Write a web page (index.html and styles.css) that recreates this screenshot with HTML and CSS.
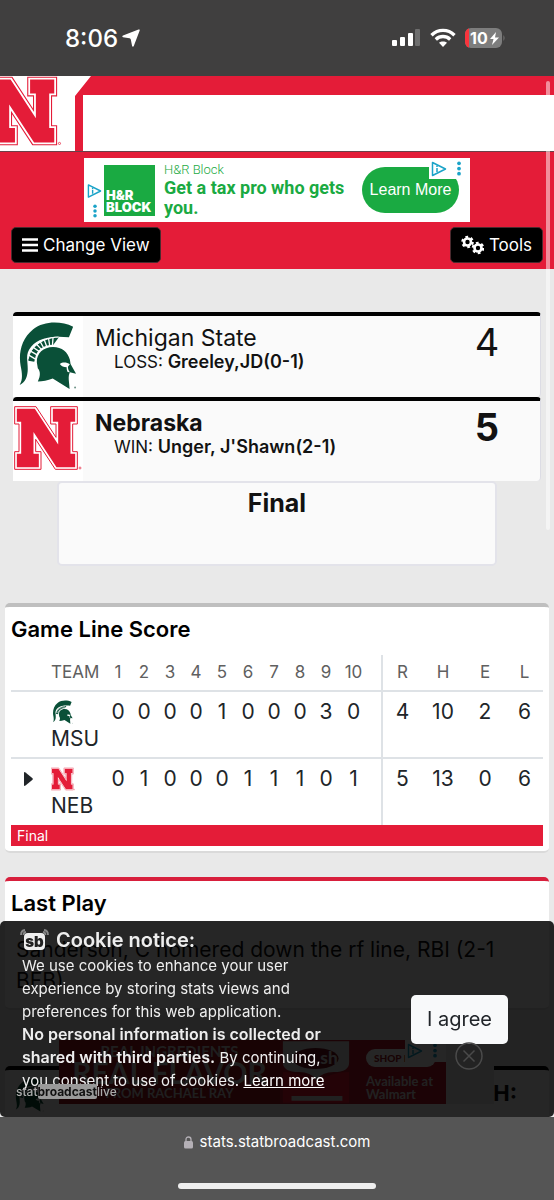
FILE: index.html
```html
<!DOCTYPE html>
<html lang="en">
<head>
	<meta charset="utf-8">
	<meta name="viewport" content="width=device-width, initial-scale=1">
	<title>Michigan State vs Nebraska</title>
	<link rel="stylesheet" href="styles.css">
</head>
<body>
<!-- team logos and ad marks, shared -->
<svg class="defs" width="0" height="0" aria-hidden="true">
	<symbol id="logo-n" viewBox="-2 -2 204 192">
		<path d="M0 0H64L124 92V52H108V0H188V52H174V135H188V188H122L63 98V135H79V188H0V135H13V52H0Z" fill="#e41c38" stroke="#fff" stroke-width="13"/>
		<path d="M0 0H64L124 92V52H108V0H188V52H174V135H188V188H122L63 98V135H79V188H0V135H13V52H0Z" fill="none" stroke="#e41c38" stroke-width="3"/>
		<circle cx="196" cy="184" r="3" fill="none" stroke="#e41c38" stroke-width="2"/>
	</symbol>
	<symbol id="logo-msu" viewBox="0 0 182 212">
		<path d="M167 17C130 0 78 -2 43 26C8 54 -2 98 5 138C10 162 12 180 2 197C21 189 27 168 27 148C27 120 18 101 38 78C62 50 105 45 154 50Z" fill="#0a5038"/>
		<path d="M29 122C30 86 70 50 123 50L106 73C82 73 53 85 49 118L47 125Z" fill="#0a5038"/>
		<path d="M29 104L52 118M33 91L57 105M41 79L63 94M52 69L69 87M64 61L76 82M77 55L86 80M91 52L95 78M105 50L103 77" stroke="#fff" stroke-width="4" fill="none"/>
		<path d="M29 116C33 80 73 51 122 49" stroke="#fff" stroke-width="3" fill="none"/>
		<path d="M55 127C54 100 75 80 105 80C133 80 150 96 157 119L159 132L176 162L157 158C150 172 155 187 156 209L104 177C89 183 72 186 58 186C66 170 67 155 58 145Z" fill="#0a5038"/>
		<path d="M126 132C135 125 148 127 157 133L151 141C151 148 153 153 157 158L150 157C147 150 147 145 147 142C138 142 131 140 126 132Z" fill="#fff"/>
		<circle cx="173" cy="205" r="3" fill="#6c9186"/>
	</symbol>
	<symbol id="adchoice" viewBox="0 0 16 16">
		<path d="M1.500 1.500L14.500 8L1.500 14.500Z" fill="none" stroke="#1aa3c8" stroke-width="1.500" stroke-linejoin="round"/>
		<path d="M6 7V11M6 4.500V6" stroke="#1aa3c8" stroke-width="1.500"/>
	</symbol>
	<symbol id="dots" viewBox="0 0 4 16">
		<circle cx="2" cy="2.500" r="2" fill="#1aa3c8"/><circle cx="2" cy="8" r="2" fill="#1aa3c8"/><circle cx="2" cy="13.500" r="2" fill="#1aa3c8"/>
	</symbol>
</svg>

<div class="statusbar">
	<div class="clock">8:06
		<svg width="18" height="18" viewBox="0 0 18 18"><path d="M16.500 .5C17.500 .2 18 .7 17.600 1.700L11.800 17C11.400 18 10.400 18 10.100 17L8.800 10.500Q8.600 9.500 7.600 9.300L1 8.200C0 8 0 7 1 6.600Z" fill="#fff"/></svg>
	</div>
	<div class="signals">
		<svg width="30" height="20" viewBox="0 0 30 20"><g fill="#fff"><rect x="1" y="12" width="5" height="6" rx="1"/><rect x="9" y="9" width="5" height="9" rx="1"/><rect x="17" y="5" width="5" height="13" rx="1"/></g><rect x="24" y="1" width="5" height="17" rx="1" fill="#6e6e6e"/></svg>
		<svg width="26" height="20" viewBox="0 0 26 20"><g fill="none" stroke="#fff" stroke-width="3.400"><path d="M1.500 7.200C8 .8 18 .8 24.500 7.200"/><path d="M5.800 11.400C10 7.600 16 7.600 20.200 11.400"/></g><path d="M13 19L9 14.800C11 12.900 15 12.900 17 14.800Z" fill="#fff"/></svg>
		<svg width="41" height="20" viewBox="0 0 41 20"><defs><clipPath id="cell"><rect x="0" y="0" width="37" height="20" rx="6"/></clipPath></defs><g clip-path="url(#cell)"><rect width="37" height="20" fill="#7d7d7d"/><rect width="4" height="20" fill="#f8343c"/></g><path d="M38.500 7Q40.500 10 38.500 13Z" fill="#7d7d7d"/><text x="5" y="16" class="battery">10</text><path d="M31 4L25 11H28.500L27 17L34 9.500H30Z" fill="#fff"/></svg>
	</div>
</div>

<header class="masthead">
	<div class="brand"><svg class="brand-n" viewBox="31 -2 172 192" width="62" height="70"><use href="#logo-n" x="-2" y="-2" width="204" height="192"/></svg></div>
	<div class="masthead-panel"></div>
</header>

<div class="topbar">
	<div class="ad">
		<div class="ad-marks">
			<svg width="15" height="16"><use href="#adchoice"/></svg>
			<svg width="4" height="14"><use href="#dots"/></svg>
		</div>
		<div class="hrb">H&amp;R<br>BLOCK</div>
		<div class="ad-copy">
			<span class="ad-name">H&amp;R Block</span>
			<strong>Get a tax pro who gets you.</strong>
		</div>
		<a class="ad-cta" href="#">Learn More</a>
		<div class="ad-corner">
			<svg width="16" height="16"><use href="#adchoice"/></svg>
			<svg width="4" height="15"><use href="#dots"/></svg>
		</div>
	</div>
	<div class="toolbar">
		<button class="btn-dark" type="button">
			<svg width="16" height="14" viewBox="0 0 16 14"><path d="M0 1.500H16M0 7H16M0 12.500H16" stroke="#fff" stroke-width="2.400"/></svg>
			Change View
		</button>
		<button class="btn-dark" type="button">
			<svg width="23" height="20" viewBox="0 0 23 20"><g fill="none" stroke="#fff"><circle cx="6.500" cy="7" r="3.500" stroke-width="2.600"/><circle cx="6.500" cy="7" r="5" stroke-width="2.600" stroke-dasharray="2.618"/><circle cx="17" cy="13" r="3.500" stroke-width="2.600"/><circle cx="17" cy="13" r="5" stroke-width="2.600" stroke-dasharray="2.618"/></g></svg>
			Tools
		</button>
	</div>
</div>

<main>
	<section class="scores">
		<div class="team">
			<div class="team-logo"><svg width="59" height="69"><use href="#logo-msu"/></svg></div>
			<div class="team-info">
				<div class="team-name">Michigan State</div>
				<div class="pitcher">LOSS: <b>Greeley,JD(0-1)</b></div>
			</div>
			<div class="runs">4</div>
		</div>
		<div class="team winner">
			<div class="team-logo"><svg width="68" height="64"><use href="#logo-n"/></svg></div>
			<div class="team-info">
				<div class="team-name">Nebraska</div>
				<div class="pitcher">WIN: <b>Unger, J'Shawn(2-1)</b></div>
			</div>
			<div class="runs">5</div>
		</div>
		<div class="status">Final</div>
	</section>

	<section class="card">
		<h2>Game Line Score</h2>
		<table class="linescore">
			<colgroup><col class="c-arrow"><col class="c-team"><col span="9" class="c-inn"><col class="c-last"><col class="c-r"><col class="c-h"><col class="c-h"><col class="c-l"></colgroup>
			<thead>
				<tr><th></th><th class="tm">TEAM</th><th>1</th><th>2</th><th>3</th><th>4</th><th>5</th><th>6</th><th>7</th><th>8</th><th>9</th><th class="last">10</th><th>R</th><th>H</th><th>E</th><th>L</th></tr>
			</thead>
			<tbody>
				<tr><td></td><td class="tm"><svg width="24" height="24"><use href="#logo-msu"/></svg>MSU</td><td>0</td><td>0</td><td>0</td><td>0</td><td>1</td><td>0</td><td>0</td><td>0</td><td>3</td><td class="last">0</td><td>4</td><td>10</td><td>2</td><td>6</td></tr>
				<tr><td><svg class="arrow" width="9" height="14" viewBox="0 0 9 14"><path d="M0 1Q0-.5 1.500 .5L8.500 6.300Q9 7 8.500 7.700L1.500 13.500Q0 14.500 0 13Z" fill="#212529"/></svg></td><td class="tm"><svg width="24" height="24"><use href="#logo-n"/></svg>NEB</td><td>0</td><td>1</td><td>0</td><td>0</td><td>0</td><td>1</td><td>1</td><td>1</td><td>0</td><td class="last">1</td><td>5</td><td>13</td><td>0</td><td>6</td></tr>
			</tbody>
		</table>
		<div class="gamestate">Final</div>
	</section>

	<section class="card lastplay">
		<h2>Last Play</h2>
		<p>Sanderson, C homered down the rf line, RBI (2-1 BFB)</p>
	</section>

	<section class="card atbat">
		<svg width="30" height="34"><use href="#logo-msu"/></svg>
		<strong>H:</strong>
	</section>
</main>

<!-- sticky ad, sits under the cookie notice -->
<div class="sticky-ad">
	<div class="sticky-main">
		<span class="ri">REAL INGREDIENTS</span>
		<span class="rf">REAL FLAVOR</span>
		<span class="rr">FROM RACHAEL RAY</span>
	</div>
	<svg class="sticky-logo" width="72" height="64" viewBox="0 0 75 64"><path d="M3 0H72V22Q72 32 56 32Q44 32 38 40Q32 32 20 32Q3 32 3 22Z" fill="#ddd"/><ellipse cx="37" cy="18" rx="24" ry="11" fill="#701020"/><text x="42" y="24" class="dish">sh</text><path d="M3 32Q20 32 38 42Q54 32 72 32V64H3Z" fill="#f01830"/><path d="M12 57H65V62H12Z" fill="#ddd"/></svg>
	<div class="sticky-shop">
		<span class="shop-btn">SHOP NOW</span>
		<b>Available at<br>Walmart</b>
		<div class="shop-marks">
			<svg width="16" height="16"><use href="#adchoice"/></svg>
			<svg width="4" height="15"><use href="#dots"/></svg>
		</div>
	</div>
</div>

<aside class="cookie">
	<div class="cookie-text">
		<h3>
			<svg width="29" height="22" viewBox="0 0 29 22"><rect x="4" y="4" width="21" height="17" rx="4" fill="#eee"/><path d="M1 6Q1 1.500 5 1M3.500 6Q3.500 3.500 6 3M28 6Q28 1.500 24 1M25.500 6Q25.500 3.500 23 3" fill="none" stroke="#888" stroke-width="1.800"/><text x="14.500" y="17.500" text-anchor="middle" class="sb">sb</text></svg>
			Cookie notice:
		</h3>
		<p>We use cookies to enhance your user<br>experience by storing stats views and<br>preferences for this web application.<br><b>No personal information is collected or<br>shared with third parties.</b> By continuing,<br>you consent to use of cookies. <a href="#">Learn more</a></p>
	</div>
	<button class="agree" type="button">I agree</button>
	<div class="sblive">stat<span>broadcast</span>live</div>
</aside>

<button class="sticky-close" type="button" aria-label="Close ad"><svg width="28" height="28" viewBox="0 0 28 28"><circle cx="14" cy="14" r="13" fill="none" stroke="#4a4a4a" stroke-width="1.500"/><path d="M8.500 8.500L19.500 19.500M19.500 8.500L8.500 19.500" stroke="#4a4a4a" stroke-width="1.500"/></svg></button>

<div class="scrollthumb"></div>

<footer class="urlbar">
	<div class="url">
		<svg width="9" height="13" viewBox="0 0 9 13"><rect y="5" width="9" height="7.500" rx="1.500" fill="#b4b0b6"/><path d="M2 6V3.500Q2 1 4.500 1T7 3.500V6" fill="none" stroke="#b4b0b6" stroke-width="1.300"/></svg>
		stats.statbroadcast.com
	</div>
	<div class="home"></div>
</footer>
</body>
</html>
```
FILE: styles.css
```css
*{
	box-sizing: border-box;
}
body{
	margin: 0;
	background: #e9e9e9;
	font-family: Inter, "Liberation Sans", sans-serif;
	color: #121212;
}
h2, h3, p{
	margin: 0;
}
svg{
	flex: none;
}
.defs{
	position: absolute;
}
/* phone status bar */
.statusbar{
	display: flex;
	justify-content: space-between;
	align-items: center;
	height: 76px;
	padding: 0 48px 0 65px;
	background: #403f3f;
	color: #fff;
}
.clock{
	display: flex;
	align-items: center;
	gap: 4px;
	font-size: 24px;
	font-weight: 500;
}
.signals{
	display: flex;
	align-items: center;
	gap: 9px;
}
.battery{
	font-size: 16px;
	font-weight: 700;
	fill: #fff;
}
/* team header */
.masthead{
	display: flex;
	align-items: flex-end;
	height: 76px;
	background: #e41c38;
	border-bottom: 1px solid #6b4048;
}
.brand{
	width: 91px;
	height: 75px;
	margin-right: -8px;
	background: #fff;
	clip-path: polygon(0 0, 100% 0, 75px 20px, 75px 100%, 0 100%);
}
.masthead-panel{
	flex: 1;
	height: 56px;
	background: #fff;
}
.topbar{
	background: #e41c38;
	padding: 6px 11px;
}
.ad{
	position: relative;
	display: flex;
	align-items: center;
	width: 386px;
	height: 64px;
	margin: 0 auto;
	padding: 0 11px 0 3px;
	background: #fff;
	color: #1aaa42;
	font-family: Roboto, sans-serif;
}
.ad-marks{
	display: flex;
	flex-direction: column;
	align-items: center;
	gap: 5px;
	padding-top: 20px;
	margin-right: 2px;
}
.hrb{
	display: flex;
	align-items: flex-end;
	width: 51px;
	height: 51px;
	padding: 0 0 3px 2px;
	background: #1aaa42;
	color: #fff;
	font: 900 13px/12px Inter, sans-serif;
}
.ad-copy{
	flex: 1;
	padding-left: 9px;
	font-size: 18px;
	line-height: 20px;
}
.ad-name{
	display: block;
	font-size: 13px;
	line-height: 16px;
	font-weight: 300;
}
.ad-cta{
	width: 97px;
	border-radius: 23px;
	background: #1aaa42;
	color: #fff;
	font: 16px/46px "Liberation Sans", sans-serif;
	text-align: center;
	text-decoration: none;
}
.ad-corner{
	position: absolute;
	top: 0;
	right: 0;
	display: flex;
	gap: 10px;
	padding: 3px 9px 2px 2px;
	background: #fff;
}
.toolbar{
	display: flex;
	justify-content: space-between;
	padding-top: 5px;
}
.btn-dark{
	display: flex;
	align-items: center;
	gap: 5px;
	height: 36px;
	padding: 0 10px;
	border: 1px solid #4a2a2e;
	border-radius: 5px;
	background: #000;
	color: #fff;
	font: 17px Inter, sans-serif;
}
/* scoreboard */
main{
	padding: 43px 5px 0;
}
.scores{
	padding: 0 8px;
}
.team{
	display: flex;
	height: 85px;
	border-top: 4px solid #000;
	border-right: 1px solid #dcdce4;
	border-radius: 4px;
	background: #fafafa;
}
.team-logo{
	display: flex;
	justify-content: center;
	width: 70px;
	padding-top: 5px;
	background: #fff;
}
.team-info{
	flex: 1;
	padding: 8px 0 0 12px;
}
.team-name{
	font-size: 23px;
	line-height: 28px;
}
.winner .team-name, .winner .runs{
	font-weight: 700;
}
.winner{
	height: 84px;
}
.pitcher{
	padding-left: 19px;
	font-size: 17px;
	line-height: 20px;
}
.pitcher b{
	font-size: 18px;
	font-weight: 600;
}
.runs{
	width: 106px;
	padding-top: 6px;
	font-size: 38px;
	line-height: 40px;
	text-align: center;
}
.status{
	height: 85px;
	margin: 0 44px;
	padding-top: 5px;
	border: 2px solid #e3e3ea;
	border-radius: 5px;
	background: #fafafa;
	font-size: 25px;
	line-height: 30px;
	font-weight: 700;
	text-align: center;
}
/* cards */
.card{
	margin-top: 24px;
	padding: 8px 6px 5px;
	border-top: 4px solid #bfbfbf;
	border-bottom: 2px solid #dadada;
	border-radius: 5px;
	background: #fff;
}
.scores + .card{
	margin-top: 37px;
}
.card h2{
	color: #000;
	font-size: 22px;
	line-height: 28px;
	font-weight: 600;
}
.linescore{
	width: 100%;
	margin-top: 12px;
	border-collapse: collapse;
	table-layout: fixed;
	color: #212529;
}
.c-arrow{ width: 34px; }
.c-team{ width: 60px; }
.c-inn{ width: 26px; }
.c-last{ width: 43px; }
.c-r{ width: 40px; }
.c-h{ width: 42px; }
.c-l{ width: 37px; }
.linescore th{
	height: 36px;
	padding: 0 0 2px;
	border-bottom: 2px solid #dee2e6;
	color: #606060;
	font-size: 17px;
	font-weight: 400;
}
.linescore td{
	height: 67px;
	padding: 6px 0 0;
	font-size: 21px;
	line-height: 27px;
	text-align: center;
	vertical-align: top;
}
.linescore tbody tr + tr td{
	border-top: 2px solid #dee2e6;
}
.linescore .tm{
	padding-left: 6px;
	text-align: left;
}
.tm svg{
	display: block;
	margin: 2px 0 1px;
}
.linescore .last{
	padding-right: 13px;
	border-right: 2px solid #dee2e6;
}
.arrow{
	margin-top: 3px;
}
.gamestate{
	padding: 0 6px;
	background: #e41c38;
	color: #fff;
	font-size: 14px;
	line-height: 21px;
}
.lastplay{
	border-top-color: #d81f3c;
	height: 133px;
}
.lastplay p{
	padding: 17px 5px 0;
	font-size: 21px;
	line-height: 31px;
}
.atbat{
	display: flex;
	justify-content: space-between;
	margin-top: 56px;
	padding: 8px 32px 40px 10px;
	border-top-color: #000;
	background: #fafafa;
	font-size: 22px;
	line-height: 30px;
}
/* sticky ad */
.sticky-ad{
	position: fixed;
	left: 59px;
	bottom: 96px;
	display: flex;
	width: 435px;
	height: 64px;
	background: #e9e9e9;
	font-family: Lato, sans-serif;
	color: #ddd;
}
.sticky-main{
	display: flex;
	flex-direction: column;
	align-items: center;
	width: 221px;
	padding: 3px 0 0;
	background: #a01420;
	font-weight: 700;
	color: #ccc;
}
.ri{
	font-size: 15px;
	line-height: 16px;
}
.rf{
	font-size: 30px;
	line-height: 26px;
}
.rr{
	font-size: 13px;
	line-height: 16px;
}
.sticky-logo{
	background: #b81828;
}
.dish{
	font-size: 18px;
	font-weight: 900;
	fill: #ddd;
}
.sticky-shop{
	position: relative;
	width: 94px;
	padding: 9px 10px 0 14px;
	background: #b81828;
	font-size: 13px;
	line-height: 13px;
}
.shop-btn{
	display: block;
	margin-bottom: 8px;
	border-radius: 9px;
	background: #fff;
	color: #a01824;
	font-size: 10px;
	line-height: 18px;
	padding-left: 8px;
	font-weight: 900;
	white-space: nowrap;
	overflow: hidden;
}
.shop-marks{
	position: absolute;
	top: 0;
	right: 0;
	display: flex;
	gap: 10px;
	padding: 3px 9px 3px 2px;
	background: #fff;
}
.sticky-close{
	position: fixed;
	left: 455px;
	bottom: 130px;
	display: flex;
	padding: 0;
	border: 0;
	background: none;
}
/* cookie notice */
.cookie{
	position: fixed;
	left: 0;
	right: 0;
	bottom: 83px;
	display: flex;
	align-items: center;
	justify-content: space-between;
	height: 196px;
	padding: 0 46px 0 22px;
	border-radius: 5px;
	background: rgba(0,0,0,.85);
	color: #eee;
}
.cookie h3{
	display: flex;
	align-items: center;
	gap: 7px;
	margin-left: -2px;
	font-size: 20px;
	line-height: 27px;
	font-weight: 600;
}
.sb{
	font: 900 15px Inter, sans-serif;
	fill: #222;
}
.cookie p{
	padding-bottom: 20px;
	font-size: 15px;
	line-height: 23px;
	white-space: nowrap;
}
.cookie b{
	font-size: 16px;
	font-weight: 600;
}
.cookie a{
	color: #fff;
}
.agree{
	height: 49px;
	padding: 0 16px;
	border: 0;
	border-radius: 5px;
	background: #f8f9fa;
	color: #212529;
	font: 20px Inter, sans-serif;
}
.sblive{
	position: absolute;
	left: 16px;
	bottom: 19px;
	color: #aaa;
	font-size: 12px;
	line-height: 12px;
	font-weight: 500;
}
.sblive span{
	border-radius: 2px;
	background: #999;
	color: #111;
	font-weight: 700;
}
.scrollthumb{
	position: fixed;
	top: 81px;
	right: 4px;
	width: 4px;
	height: 449px;
	border-radius: 2px;
	background: rgba(255,255,255,.5);
}
/* browser bar */
.urlbar{
	position: fixed;
	left: 0;
	right: 0;
	bottom: 0;
	display: flex;
	flex-direction: column;
	align-items: center;
	justify-content: space-between;
	height: 83px;
	padding: 15px 0 11px;
	background: #555;
	color: #fff;
}
.url{
	display: flex;
	align-items: center;
	gap: 7px;
	font-size: 15px;
	line-height: 20px;
}
.home{
	width: 198px;
	height: 6px;
	border-radius: 3px;
	background: #eee;
}
```
